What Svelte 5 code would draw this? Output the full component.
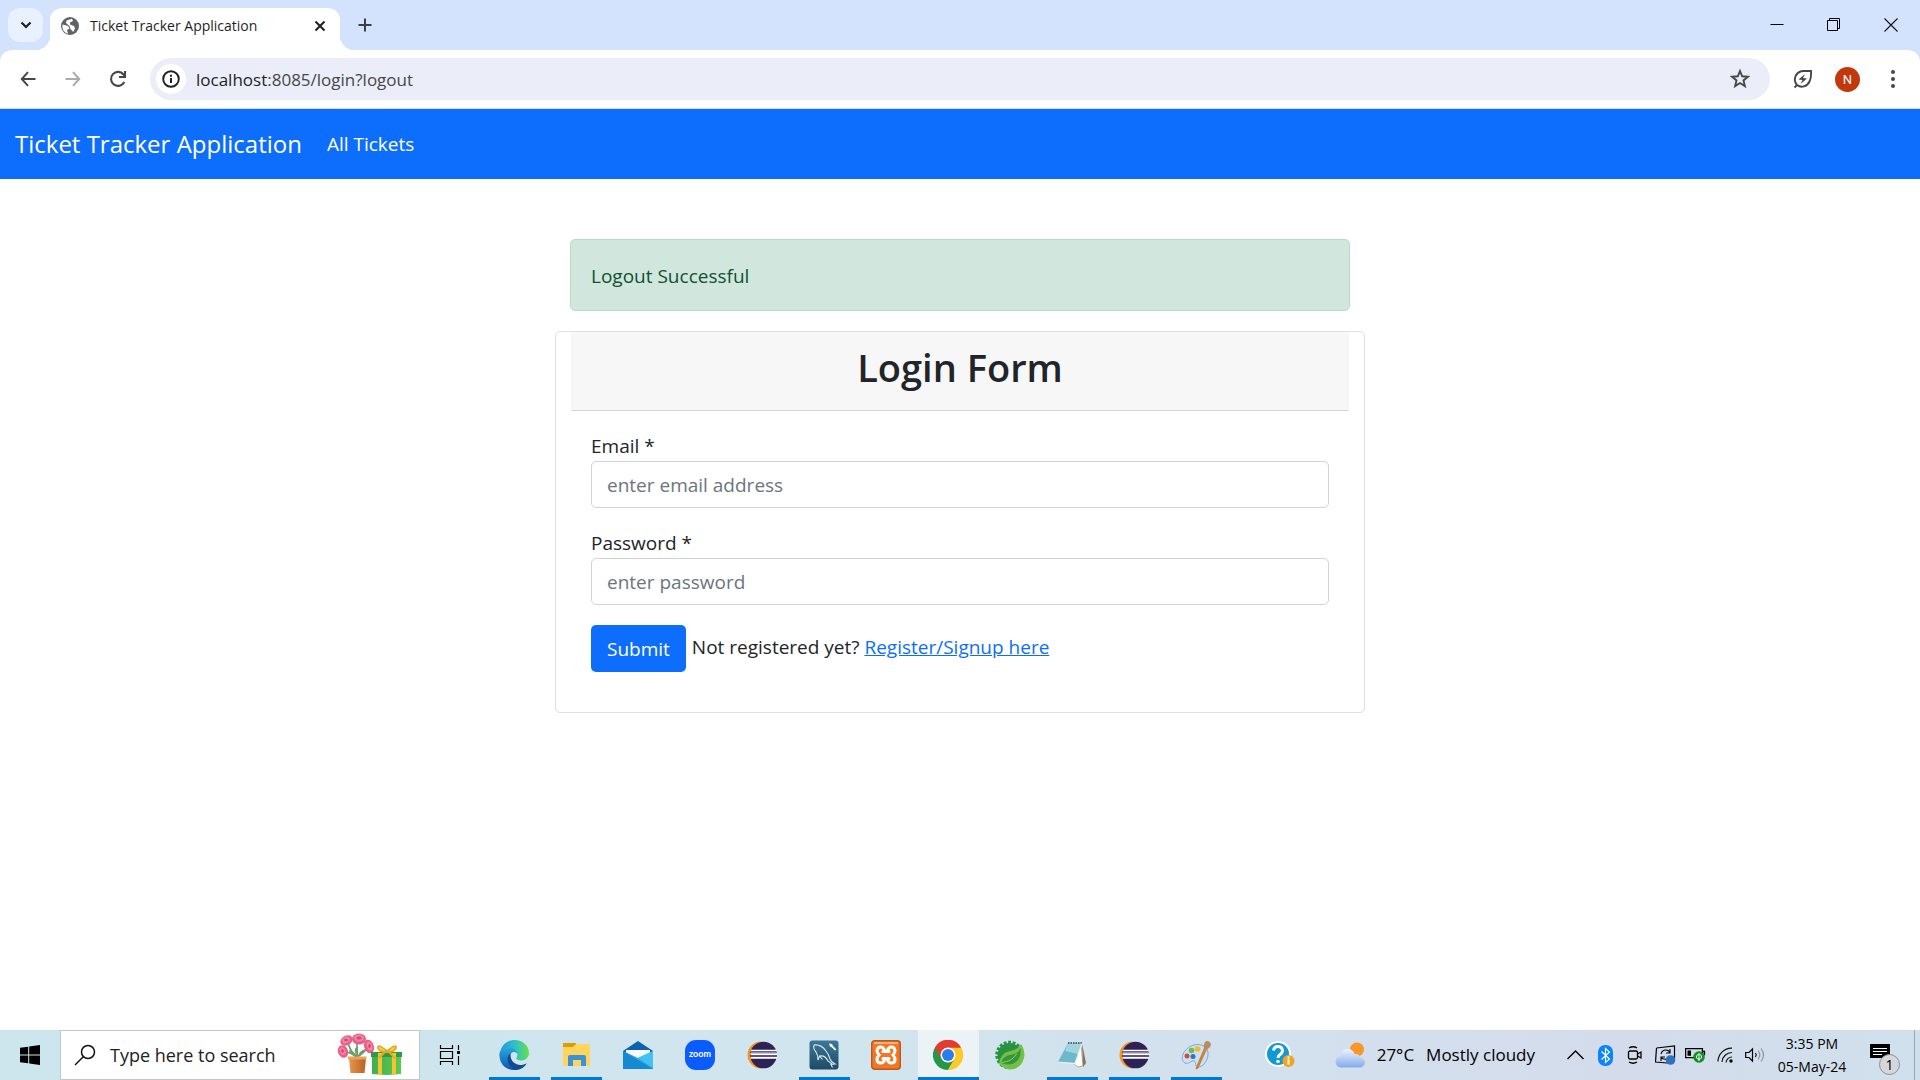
<script>
  let email = $state('');
  let password = $state('');
</script>

{#snippet eclipse()}
  <svg width="30" height="30" viewBox="0 0 30 30" aria-hidden="true">
    <path d="M14 1.5A13.5 13.5 0 0 0 14 28.500Q5.500 24 5.500 15T14 1.500Z" fill="#f7941e" />
    <circle cx="16.500" cy="15" r="13.300" fill="#2c2255" />
    <path d="M4 10.500h25.500M3.500 14.200h26.500M3.500 17.900h26.500" stroke="#fff" stroke-width="1.700" />
    <path d="M4 12.300h25M4 16h25" stroke="#8f86b5" stroke-width="1.200" />
  </svg>
{/snippet}

<div class="screen">
  <header class="browser">
    <div class="tabstrip">
      <button class="tabsearch" aria-label="Search tabs">
        <svg width="12" height="8" viewBox="0 0 12 8"><path d="M1.500 1.500 6 6l4.500-4.500" fill="none" stroke="#1f1f1f" stroke-width="2.200" /></svg>
      </button>
      <div class="tab">
        <svg class="globe" width="20" height="20" viewBox="0 0 20 20" aria-hidden="true">
          <circle cx="10" cy="10" r="9" fill="#5f6368" />
          <path d="M2.500 8.500 8 10l1.500 2.500L7 14l1 3.500C4 17 1.800 13 2.500 8.500ZM6.500 4.500 12 2.700l1 2.300-3 1.500v2l4 1.500 1 2.500-1.800 3.500-2.700-3-1-3L6 7Z" fill="#fff" />
        </svg>
        <span class="tabtitle">Ticket Tracker Application</span>
        <button class="tabclose" aria-label="Close tab">
          <svg width="12" height="12" viewBox="0 0 12 12"><path d="m1.500 1.500 9 9m0-9-9 9" stroke="#1f1f1f" stroke-width="2" /></svg>
        </button>
      </div>
      <button class="newtab" aria-label="New tab">
        <svg width="14" height="14" viewBox="0 0 14 14"><path d="M7 .5v13M.5 7h13" stroke="#3c4043" stroke-width="2" /></svg>
      </button>
      <div class="windowctl">
        <button aria-label="Minimize"><svg width="14" height="14" viewBox="0 0 14 14"><path d="M.5 6.500h13" stroke="#000" /></svg></button>
        <button aria-label="Restore"><svg width="14" height="14" viewBox="0 0 14 14"><path d="M.5 2.500h10v10H.5ZM2.500 2.500v-2h10v10h-2" fill="none" stroke="#000" /></svg></button>
        <button aria-label="Close"><svg width="14" height="14" viewBox="0 0 14 14"><path d="m.5.5 13 13m0-13-13 13" stroke="#111" stroke-width="1.100" /></svg></button>
      </div>
    </div>

    <div class="toolbar">
      <nav class="history" aria-label="History">
        <button aria-label="Back"><svg width="16" height="16" viewBox="0 0 16 16"><path d="M8 1.200 1.800 8 8 14.800M2 8h13.500" fill="none" stroke="#474747" stroke-width="2" /></svg></button>
        <button aria-label="Forward"><svg width="16" height="16" viewBox="0 0 16 16"><path d="M8 1.200 14.200 8 8 14.800M14 8H.5" fill="none" stroke="#ababab" stroke-width="2" /></svg></button>
        <button aria-label="Reload"><svg width="18" height="18" viewBox="0 0 18 18"><path d="M15.300 12A7 7 0 1 1 14.500 4.500L16 6M16 1v6h-6" fill="none" stroke="#474747" stroke-width="2.100" /></svg></button>
      </nav>
      <div class="omnibox">
        <button class="info" aria-label="Site information">
          <svg width="18" height="18" viewBox="0 0 18 18"><circle cx="9" cy="9" r="7.800" fill="none" stroke="#1f1f1f" stroke-width="1.900" /><path d="M9 8v5M9 4.800v2" stroke="#1f1f1f" stroke-width="2" /></svg>
        </button>
        <span class="url">localhost<span class="path">:8085/login?logout</span></span>
        <button class="star" aria-label="Bookmark this tab">
          <svg width="22" height="22" viewBox="0 0 22 22"><path d="m11 3 2.200 5.300 5.700.4-4.400 3.700 1.400 5.700L11 15l-4.900 3.100 1.400-5.700-4.400-3.700 5.700-.4Z" fill="none" stroke="#474747" stroke-width="1.900" /></svg>
        </button>
      </div>
      <div class="extras">
        <button aria-label="Energy saver">
          <svg width="20" height="20" viewBox="0 0 20 20"><path d="M1.500 18.500 4 16M4 16C-.5 11 2.500 2.800 10 2h8c.3 4 0 7.500-1.500 10.500C14 18 8 19 4 16Z" fill="none" stroke="#474747" stroke-width="1.900" /><path d="m12 5-6.500 5.500 4 .5L7.500 15l6.500-5.500-4-.5Z" fill="#474747" /></svg>
        </button>
        <button aria-label="Profile"><span class="avatar">N</span></button>
        <button aria-label="Menu">
          <svg width="4" height="18" viewBox="0 0 4 18" fill="#474747"><circle cx="2" cy="2" r="2" /><circle cx="2" cy="9" r="2" /><circle cx="2" cy="16" r="2" /></svg>
        </button>
      </div>
    </div>
  </header>

  <nav class="navbar">
    <a class="brand" href="#home">Ticket Tracker Application</a>
    <a class="navlink" href="#tickets">All Tickets</a>
  </nav>

  <main>
    <div class="alert" role="status">Logout Successful</div>
    <section class="card">
      <h1>Login Form</h1>
      <form onsubmit={(e) => e.preventDefault()}>
        <label for="email">Email *</label>
        <input id="email" type="email" placeholder="enter email address" bind:value={email} />
        <label for="password">Password *</label>
        <input id="password" type="password" placeholder="enter password" bind:value={password} />
        <div class="actions">
          <button class="submit" type="submit">Submit</button>
          <span>Not registered yet? <a href="#register">Register/Signup here</a></span>
        </div>
      </form>
    </section>
  </main>

  <footer class="taskbar">
    <button class="start" aria-label="Start">
      <svg width="20" height="20" viewBox="0 0 20 20"><path d="M0 2.800 8.200 1.700v7.800H0ZM9.200 1.500 20 0v9.500H9.200ZM0 10.500h8.200v7.800L0 17.200ZM9.200 10.500H20V20L9.200 18.500Z" /></svg>
    </button>
    <label class="search">
      <svg width="22" height="22" viewBox="0 0 22 22" aria-hidden="true"><circle cx="14" cy="8" r="6.500" fill="none" stroke="#111" stroke-width="1.500" /><path d="M9.500 12.500 1 21" stroke="#111" stroke-width="1.500" /></svg>
      <input type="text" placeholder="Type here to search" />
      <svg class="gifts" width="66" height="44" viewBox="0 0 66 44" aria-hidden="true">
        <defs>
          <linearGradient id="pot"><stop stop-color="#e8964a" /><stop offset="1" stop-color="#b8621f" /></linearGradient>
          <linearGradient id="box"><stop stop-color="#3fae50" /><stop offset="1" stop-color="#5dc94f" /></linearGradient>
        </defs>
        <path d="M20 24V9M20 24Q14 20 11 10M20 24Q27 20 31 14M19 24Q13 18 7 20" fill="none" stroke="#5a9b6b" stroke-width="1.600" />
        <path d="M19 23q-7-1-7-6 6 1 7 6ZM21 23q6-1 7-7-6 2-7 7ZM20 23q-4-5-1-9 4 4 1 9Z" fill="#6fa06c" />
        <g fill="#ea5f88"><ellipse cx="22" cy="6" rx="7" ry="5.500" /><ellipse cx="9.500" cy="7.500" rx="6.500" ry="4.800" transform="rotate(-28 9.500 7.500)" /><ellipse cx="32" cy="13.500" rx="4.800" ry="7" transform="rotate(-18 32 13.500)" /><ellipse cx="6" cy="18.500" rx="5" ry="6.500" transform="rotate(-20 6 18.500)" /></g>
        <g fill="#f283a3"><ellipse cx="22" cy="5" rx="5" ry="3.500" /><ellipse cx="9" cy="7" rx="4" ry="3" transform="rotate(-28 9 7)" /><ellipse cx="32.500" cy="13" rx="2.600" ry="4.500" transform="rotate(-18 32.500 13)" /><ellipse cx="5.500" cy="18" rx="2.800" ry="4" transform="rotate(-20 5.500 18)" /></g>
        <g fill="#d24973"><ellipse cx="22" cy="5" rx="2.600" ry="1.500" /><ellipse cx="9" cy="7" rx="2" ry="1.300" /><ellipse cx="32.500" cy="13" rx="1.300" ry="2" /><ellipse cx="5.500" cy="18" rx="1.400" ry="1.800" /></g>
        <path d="M12 25h17l-1.500 15h-14Z" fill="url(#pot)" /><path d="M11 23.500h18.500v3H11Z" fill="#e9a35c" />
        <path d="M35 22h29v19l-14 1-15-1Z" fill="url(#box)" /><path d="M34 19h31v5H34Z" fill="#2f9a45" />
        <path d="M41 20h4v21.500h-4ZM55 20h4v21.500h-4Z" fill="#f4c531" />
        <path d="M50 18q-10-8-9-3 1 4 9 4 8 0 9-4 1-5-9 3ZM49 18l-7 7M51 18l7 7" fill="#f9cf45" stroke="#e0ac28" stroke-width="1.800" />
      </svg>
    </label>
    <button class="taskview" aria-label="Task view">
      <svg width="22" height="20" viewBox="0 0 22 20"><path d="M1.500 0v3.500h12V0M1.500 20v-3.500h12V20M1.500 6.500h12v7h-12ZM19.500 0v5M19.500 11v9" fill="none" stroke="#000" stroke-width="1.200" /><path d="M18 6h3v3h-3Z" /></svg>
    </button>

    <div class="apps">
      <button class="app open" aria-label="Edge">
        <svg width="30" height="30" viewBox="0 0 30 30">
          <defs>
            <linearGradient id="edgeTop"><stop stop-color="#2498dd" /><stop offset=".55" stop-color="#32c3c4" /><stop offset="1" stop-color="#66e043" /></linearGradient>
            <linearGradient id="edgeLow" y2="1" x2="0"><stop stop-color="#2aa7e2" /><stop offset="1" stop-color="#0e56ae" /></linearGradient>
          </defs>
          <path d="M1 13C2 5.500 8 0 15.500 0 24 0 30 6 30 13c0 5-4 7.500-8 7.500-3.500 0-5.500-1.500-4.500-3 2.500-4-1-7-5-7C6 10.500 1 14 1 13Z" fill="url(#edgeTop)" />
          <path d="M.5 16C-.5 10 5 7 10 7.500c5 .5 8 3 8 6-3-3-7-1-7 3.500 0 6 6 9 12 8 2-.3 4-1.700 4.500-1.500C25 28 20 30 15 30 7.500 30 1 25 .5 16Z" fill="url(#edgeLow)" />
          <path d="M11.500 13.500C6 17 9 27 16 29.900 20.500 30 25 28 27.500 23.500c-8 4.500-17-1-16-10Z" fill="#114b92" />
        </svg>
      </button>
      <button class="app open" aria-label="File Explorer">
        <svg width="30" height="30" viewBox="0 0 30 30"><path d="M2 3h13v6H2Z" fill="#dc9c08" /><path d="M2 7h10l3-3h12q2 0 2 2v20H2Z" fill="#ffd55c" /><path d="M7 26v-9q0-2 2-2h14q2 0 2 2v9h-5v-6h-8v6Z" fill="#3a93d8" /></svg>
      </button>
      <button class="app" aria-label="Mail">
        <svg width="30" height="30" viewBox="0 0 30 30"><path d="M0 11 15 1l15 10v17H0Z" fill="#0b62ae" /><path d="M3 10h24v9H3Z" fill="#f8f8f8" /><path d="m0 11 15 7 15-7v18H0Z" fill="#29a8e5" /><path d="m0 11 30 18H0Z" fill="#1589d2" /><path d="m30 11-15 7 15 10Z" fill="#42c2f2" /></svg>
      </button>
      <button class="app" aria-label="Zoom"><span class="zoom">zoom</span></button>
      <button class="app" aria-label="Eclipse">{@render eclipse()}</button>
      <button class="app open" aria-label="MySQL Workbench">
        <svg width="30" height="30" viewBox="0 0 30 30"><defs><linearGradient id="sql" x2="0" y2="1"><stop stop-color="#3c7898" /><stop offset="1" stop-color="#1f4a66" /></linearGradient></defs><rect x=".5" y=".5" width="29" height="29" rx="3" fill="url(#sql)" /><path d="M5 5q7-1 12 6 3 4 4 8 1 3 5 5l-4 .5 1.500 3M5 5q-1 4 2 7 2 3 2 8l1.500-4 3 3.500M11 16q5-1 8 5l4 3" fill="none" stroke="#dcebf2" stroke-width="1.100" /><path d="m20 3.500 3 .5 1 2 3.500 3.500-1.500 1-3-3-2-1Z" fill="#fff" /></svg>
      </button>
      <button class="app" aria-label="XAMPP">
        <svg width="30" height="30" viewBox="0 0 30 30"><rect x=".7" y=".7" width="28.600" height="28.600" rx="3" fill="#f37623" stroke="#b45a22" stroke-width="1.400" /><path d="M3 3h24" stroke="#fbb07a" stroke-width="2" /><path d="M13.500 10.500Q12.500 7 9.500 7T6 10.500Q6 13 8 15 6 17 6 19.500 6 23 9.500 23T13.500 19.500M16.500 10.500Q17.500 7 20.500 7T24 10.500Q24 13 22 15 24 17 24 19.500 24 23 20.500 23T16.500 19.500M12 11.500h6M12 18.500h6" fill="none" stroke="#fff" stroke-width="3" stroke-linecap="round" /></svg>
      </button>
      <button class="app open active" aria-label="Chrome">
        <svg width="30" height="30" viewBox="0 0 30 30"><path d="M2 7.500A15 15 0 0 1 28 7.500L15 15Z" fill="#e33b2e" /><path d="M28 7.500A15 15 0 0 1 15 30L15 15Z" fill="#fdc925" /><path d="M2 7.500A15 15 0 0 0 15 30l6.500-11.200L15 15Z" fill="#25964a" /><path d="M15 7.500h13A15 15 0 0 1 15 30l6.500-11.200Z" fill="#fdc925" /><path d="M2 7.500 8.500 18.800 15 8V7.500h13A15 15 0 0 0 2 7.500Z" fill="#e33b2e" /><circle cx="15" cy="15" r="7.500" fill="#fff" /><circle cx="15" cy="15" r="6" fill="#2b7cec" /></svg>
      </button>
      <button class="app" aria-label="Spring Tools">
        <svg width="30" height="30" viewBox="0 0 30 30"><circle cx="14.500" cy="15" r="12" fill="#279240" /><circle cx="14.500" cy="15" r="12.500" fill="none" stroke="#279240" stroke-width="3.500" stroke-dasharray="2.800 1.600" /><path d="M26 4q3 4 3.500 11-1 10-9 13.500-9 3-16.500-4.500Q5 13 15 11q8-1 11-7Z" fill="#74c044" /><path d="M25.500 8q-2 6-9 6.500-10 2-10 8.500 10 4 16-2.500 4-5 3-12.500Z" fill="#36963e" /><path d="M7 22.500q10-1 15-9" fill="none" stroke="#8bd062" /></svg>
      </button>
      <button class="app open" aria-label="Notepad">
        <svg width="30" height="30" viewBox="0 0 30 30"><path d="m24 4 2 22-5 1-4-3Z" fill="#fff" stroke="#a39b8a" stroke-width=".8" /><path d="m25 3 4 20-3 4Z" fill="#8b7454" /><path d="M11 3h14l-7 20-17-1Z" fill="#6db8ca" /><path d="M11 3h14l-4 11-13-3Z" fill="#a0d5df" /><path d="M11 3h15" stroke="#536570" stroke-width="2" stroke-dasharray="1.500 1" /><path d="m1 22 17 1.500 7-20" fill="none" stroke="#e6f3f5" stroke-width="1.200" /></svg>
      </button>
      <button class="app open" aria-label="Eclipse workspace">{@render eclipse()}</button>
      <button class="app open" aria-label="Paint">
        <svg width="30" height="30" viewBox="0 0 30 30"><path d="M13 5C20 3 28 7 27 15c-1 8-6 12-10 12-4-.5-1-5-4-6-3-1-5 4-9 2C-2 20 2 8 13 5Z" fill="#c6e2f4" stroke="#80a9ce" /><circle cx="10.500" cy="10.500" r="2.800" fill="#70bd4f" /><circle cx="16.500" cy="9" r="2.800" fill="#f5b928" /><circle cx="6" cy="16" r="2.500" fill="#db4937" /><circle cx="12" cy="16.500" r="2.500" fill="#3a6cc2" /><path d="m26 8-9 20-2 1 1-3 8-19Z" fill="#e38c36" stroke="#bd6820" stroke-width=".8" /><path d="M23 8q-1-4 2-7 5 0 5 4-1 3-4 4Z" fill="#b88c5e" /></svg>
      </button>
    </div>

    <div class="tray">
      <button class="help" aria-label="Help">
        <svg width="30" height="28" viewBox="0 0 30 28"><circle cx="13" cy="13" r="13" fill="#fff" /><circle cx="13" cy="13" r="11" fill="#1199d6" /><path d="M8.500 9.500Q9 5.500 13 5.500t4.500 4q0 2.500-3 4.500-1.500 1-1.500 3" fill="none" stroke="#fff" stroke-width="3" /><circle cx="13" cy="20.500" r="1.800" fill="#fff" /><circle cx="23.500" cy="20" r="6" fill="#f2a51f" /><path d="M23.500 18.500v5M23.500 15.500v2" stroke="#fff" stroke-width="2" /></svg>
      </button>
      <button class="weather">
        <svg width="30" height="26" viewBox="0 0 30 26" aria-hidden="true"><defs><linearGradient id="cloud" x2="0" y2="1"><stop stop-color="#edf3fd" /><stop offset="1" stop-color="#83abea" /></linearGradient></defs><circle cx="22" cy="7.500" r="7" fill="#f9962a" /><path d="M6 25.500a5.800 5.800 0 0 1-.5-11.500C6 9.500 9 7 12.500 7c4 0 6 2 7.200 5 5 0 5.300 2.500 5.300 3.500 7 1 6 10-.5 10Z" fill="url(#cloud)" /></svg>
        <span>27°C</span><span>Mostly cloudy</span>
      </button>
      <button class="cell" aria-label="Show hidden icons"><svg width="17" height="10" viewBox="0 0 17 10"><path d="m.5 9 8-8 8 8" fill="none" stroke="#000" stroke-width="1.400" /></svg></button>
      <button class="cell" aria-label="Bluetooth"><svg width="15" height="21" viewBox="0 0 15 21"><rect width="15" height="21" rx="7" fill="#0a84ff" /><path d="m3.500 6.500 8 7.500-4 3.500v-14l4 3.500-8 7.500" fill="none" stroke="#fff" stroke-width="1.200" /></svg></button>
      <button class="cell" aria-label="Meet now"><svg width="16" height="18" viewBox="0 0 16 18"><rect x="1.500" y="5" width="9" height="8" rx="1.500" fill="none" stroke="#000" stroke-width="1.300" /><path d="m10.500 8 3.500-2v6l-3.500-2M2 2q4-2.500 8 0M2 16q4 2.500 8 0" fill="none" stroke="#000" stroke-width="1.300" /></svg></button>
      <button class="cell" aria-label="Windows Update"><svg width="21" height="20" viewBox="0 0 21 20"><path d="m1.500 3 18-2v13M1.500 3l-1 14 12 1" fill="none" stroke="#000" stroke-width="1.200" /><path d="M6 9q1-4 5-4 3 0 4 3M15 4v4h-4M14 11q-1 4-5 3-2 0-3-2M6 16v-4h4" fill="none" stroke="#000" stroke-width="1.100" /><circle cx="15.500" cy="15" r="4.800" fill="#2e72bc" /></svg></button>
      <button class="cell" aria-label="Battery"><svg width="21" height="16" viewBox="0 0 21 16"><path d="M.6 1.600h16.800v9H.6ZM18 4.500h1.500v3H18" fill="none" stroke="#000" stroke-width="1.300" /><path d="M2.500 3.500H6v5.300H2.500Z" /><circle cx="14" cy="10" r="5.800" fill="#119023" /><path d="M14 7v7M11.500 9l2.500-2.500L16.500 9v2L14 12.500 11.500 11Z" fill="none" stroke="#fff" /></svg></button>
      <button class="cell" aria-label="Wi-Fi"><svg width="16" height="16" viewBox="0 0 16 16"><path d="M1 14.500A13.500 13.500 0 0 1 15 1.200M5 15A10 10 0 0 1 15 5.500M9 15.500A6 6 0 0 1 15 10" fill="none" stroke="#111" stroke-width="1.200" /><circle cx="14" cy="14" r="1.700" /></svg></button>
      <button class="cell" aria-label="Volume"><svg width="21" height="16" viewBox="0 0 21 16"><path d="M.7 5.500H4L7.500 2v12L4 10.500H.7Z" fill="none" stroke="#000" stroke-width="1.200" /><path d="M10.500 6q1.500 2 0 4" fill="none" stroke="#000" stroke-width="1.200" /><path d="M13 3.500q3.500 4.500 0 9M16 1.500q5 6.500 0 13" fill="none" stroke="#8b929b" stroke-width="1.200" /></svg></button>
      <button class="clock"><span>3:35 PM</span><span>05-May-24</span></button>
      <button class="notes" aria-label="Notifications">
        <svg width="20" height="18" viewBox="0 0 20 18"><path d="M0 0h20v14h-3v4l-4-4H0Z" /><path d="M3 4.500h14M3 7.500h14M3 10.500h9" stroke="#fff" stroke-width="1.200" /></svg>
        <span class="count">1</span>
      </button>
      <button class="desktop" aria-label="Show desktop"></button>
    </div>
  </footer>
</div>

<style>
  :global(body) { margin: 0; }
  .screen, .screen * { box-sizing: border-box; }
  .screen {
    display: flex;
    flex-direction: column;
    min-height: 100vh;
    background: #fff;
    color: #212529;
    font-family: "Open Sans", "Noto Sans", sans-serif;
    font-size: 19px;
    line-height: 30px;
  }
  button { border: 0; padding: 0; background: none; font: inherit; color: inherit; }
  svg { display: block; flex: none; }

  .browser { background: #d3e3fd; }
  .tabstrip { display: flex; height: 50px; padding: 0 1px 0 8px; }
  .tabstrip button { display: flex; align-items: center; justify-content: center; }
  .tabstrip .tabsearch { width: 35px; height: 34px; margin: 8px 7px 0 0; border-radius: 12px; background: #e9f0fe; }
  .tab {
    position: relative;
    display: flex;
    align-items: center;
    width: 290px;
    margin-top: 8px;
    padding: 0 10px 7px 10px;
    border-radius: 12px 12px 0 0;
    background: #fff;
    font-size: 14px;
    line-height: 20px;
    color: #1f1f1f;
  }
  .tab::before, .tab::after { content: ""; position: absolute; bottom: 0; width: 14px; height: 14px; }
  .tab::before { right: 100%; background: radial-gradient(circle at 0 0, transparent 14px, #fff 14px); }
  .tab::after { left: 100%; background: radial-gradient(circle at 100% 0, transparent 14px, #fff 14px); }
  .tabtitle { margin-left: 10px; flex: 1; white-space: nowrap; }
  .tabclose { width: 20px; height: 20px; }
  .newtab { width: 34px; margin-left: 8px; }
  .windowctl { display: flex; margin-left: auto; }
  .windowctl button { width: 57px; }

  .toolbar {
    display: flex;
    align-items: center;
    height: 59px;
    padding: 0 5px;
    border-radius: 12px 12px 0 0;
    border-bottom: 1px solid #d8dce3;
    background: #fff;
  }
  .history, .extras { display: flex; }
  .history button, .extras button { display: flex; align-items: center; justify-content: center; width: 45px; height: 42px; }
  .omnibox {
    display: flex;
    align-items: center;
    flex: 1;
    height: 42px;
    margin: 0 10px;
    padding: 0 19px 0 6px;
    border-radius: 21px;
    background: #ebeef8;
  }
  .info { display: flex; align-items: center; justify-content: center; width: 30px; height: 30px; border-radius: 50%; background: #fff; }
  .url { flex: 1; margin-left: 10px; padding-top: 1px; font-size: 17px; color: #1f1f1f; }
  .path { color: #474747; }
  .avatar { width: 25px; height: 25px; border-radius: 50%; background: #c2380c; color: #fff; font: 13px/25px Roboto, sans-serif; }

  .navbar { display: flex; align-items: center; gap: 25px; height: 70px; padding: 0 15px; background: #0d6efd; }
  .navbar a { color: #fff; text-decoration: none; }
  .brand { font-size: 24px; }

  main { flex: 1; width: 810px; max-width: 100%; margin: 0 auto; padding-top: 60px; }
  .alert {
    margin: 0 15px 20px;
    padding: 21px 20px 19px;
    border: 1px solid #badbcc;
    border-radius: 5px;
    background: #d1e7dd;
    color: #0f5132;
  }
  .card { padding: 0 15px; border: 1px solid #dfdfdf; border-radius: 5px; }
  h1 {
    margin: 0;
    padding: 11px 20px 19px;
    border-bottom: 1px solid #d4d5d6;
    background: #f7f7f7;
    font-size: 38px;
    line-height: 48px;
    font-weight: 600;
    text-align: center;
  }
  form { padding: 20px 20px 40px; }
  form label { display: block; }
  form input {
    display: block;
    width: 100%;
    height: 47px;
    margin-bottom: 20px;
    padding: 1px 15px 0;
    border: 1px solid #ced4da;
    border-radius: 5px;
    background: #fff;
    color: #212529;
    font: inherit;
  }
  input::placeholder { color: #6c757d; opacity: 1; }
  .actions { display: flex; gap: 6px; }
  .actions a { color: #0d6efd; }
  .actions span { padding-top: 7px; }
  .submit { height: 47px; padding: 1px 16px 0; border-radius: 5px; background: #0d6efd; color: #fff; }

  .taskbar { display: flex; height: 50px; background: linear-gradient(90deg, #cde5ec, #d1e5ee 45%, #d4dcec 85%, #d0e0ed); color: #000; font-size: 18px; }
  .taskbar button { display: flex; align-items: center; justify-content: center; }
  .start { width: 60px; }
  .search { display: flex; align-items: center; width: 360px; padding: 0 16px 0 13px; border: 1px solid #c3c6ca; background: #fff; }
  .search input { flex: 1; min-width: 0; margin-left: 14px; padding: 0; border: 0; outline: 0; background: none; font: inherit; }
  .search input::placeholder { color: #222; }
  .taskview { width: 60px; }
  .apps { display: flex; margin-left: 3px; }
  .app { position: relative; width: 62px; }
  .open::after { content: ""; position: absolute; left: 6px; right: 5px; bottom: 0; height: 3px; background: #0078d7; }
  .active { background: linear-gradient(90deg, transparent 1px, #ebf3f6 1px); }
  .active::after { left: 1px; right: 0; }
  .zoom { width: 30px; height: 30px; border-radius: 11px; background: #0b5cff; color: #fff; font: 700 9px/28px Lato, sans-serif; }
  .tray { display: flex; flex: 1; justify-content: flex-end; }
  .help { margin-right: 40px; }
  .tray .weather { gap: 12px; margin-right: 25px; font-size: 17px; white-space: nowrap; }
  .cell { width: 30px; }
  .tray .clock { flex-direction: column; width: 84px; gap: 3px; font-size: 14px; line-height: 20px; white-space: nowrap; }
  .notes { position: relative; width: 60px; }
  .count {
    position: absolute;
    left: 25px;
    top: 24px;
    width: 21px;
    height: 21px;
    border: 1px solid #8d8f92;
    border-radius: 50%;
    background: #d5d7da;
    font-size: 14px;
    line-height: 19px;
  }
  .notes svg { margin: 0 8px 4px 0; }
  .taskbar .desktop { width: 6px; border-left: 1px solid #9ba5b1; }
</style>
